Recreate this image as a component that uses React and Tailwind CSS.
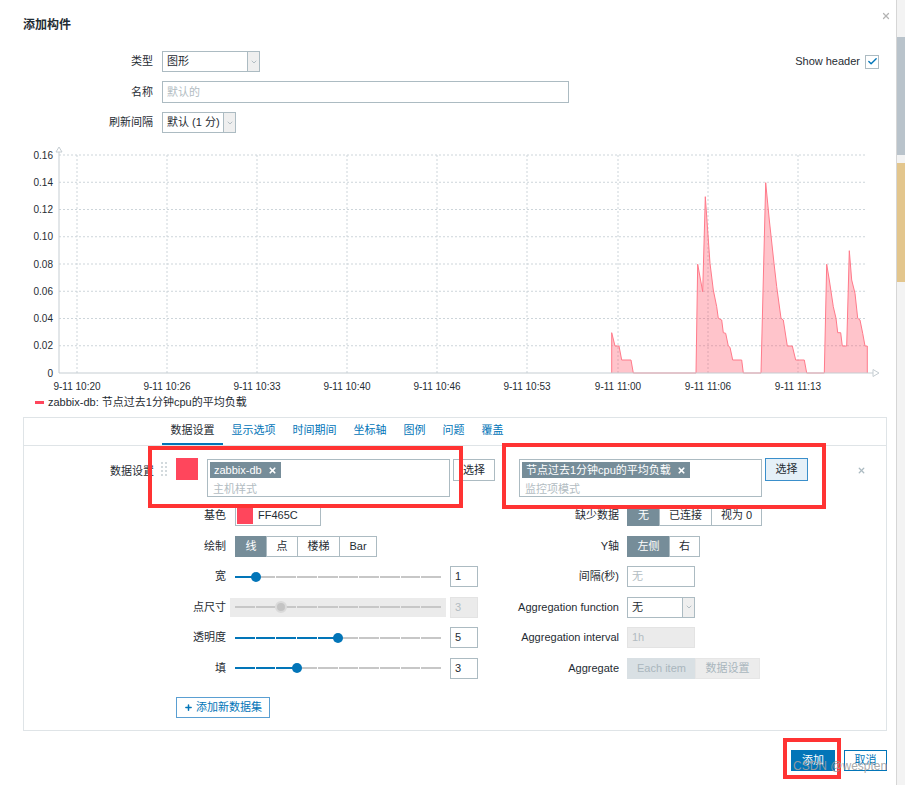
import React from 'react';
import { X, Check, ChevronDown, Plus } from 'lucide-react';

// chart geometry, page coordinates
const yOf = (v) => 373 - v * 1362.5;
const yTicks = [0.16, 0.14, 0.12, 0.1, 0.08, 0.06, 0.04, 0.02, 0];
const xTicks = [
    [77, '9-11 10:20'],
    [167, '9-11 10:26'],
    [257, '9-11 10:33'],
    [347, '9-11 10:40'],
    [437, '9-11 10:46'],
    [527, '9-11 10:53'],
    [618, '9-11 11:00'],
    [708, '9-11 11:06'],
    [798, '9-11 11:13'],
];
const data = [
    [611.7, 373], [611.7, 332.7], [615, 346], [619, 346], [621.7, 360], [631, 360], [633.3, 373],
    [696, 373], [697.7, 264.3], [702.7, 291.7], [705.3, 196.7], [710, 263.3], [713.3, 290], [716.7, 306.7],
    [718.3, 318.3], [721.7, 320], [723.3, 332.7], [725.7, 333.3], [728.3, 346], [730, 347.3], [732.7, 360],
    [741.7, 360], [743.3, 373],
    [761, 373], [765.7, 182.7], [769.3, 220], [774, 263.3], [776.7, 286.7], [781, 318.3], [783.3, 320],
    [787.3, 346], [792.3, 346], [795.7, 360], [804.3, 360], [806.7, 373],
    [824.3, 373], [826.7, 264.3], [829.3, 280], [833.3, 306.7], [836, 318.3], [837.7, 332.7], [840.7, 332.7],
    [842.3, 346], [846.7, 346], [849.3, 250.7], [851.7, 280], [855, 293.3], [857.7, 318.3], [860, 320],
    [862.7, 333.3], [865, 346], [867.3, 346], [867.3, 373],
];

function Chart() {
    const pts = data.map((p) => p.join(',')).join(' ');
    return (
        <svg width="896" height="250" viewBox="0 145 896 250" className="block">
            {yTicks.map((v) => (
                <g key={v}>
                    {v > 0 && (
                        <line x1="59" x2="867" y1={yOf(v)} y2={yOf(v)} stroke="#cdd5da" strokeDasharray="2 2" />
                    )}
                    <text x="53" y={yOf(v) + 3.5} textAnchor="end" fontSize="10" fill="#1f2c33">
                        {v === 0 ? '0' : v.toFixed(2)}
                    </text>
                </g>
            ))}
            {xTicks.map(([x, label]) => (
                <g key={label}>
                    <line x1={x} x2={x} y1="155" y2="373" stroke="#cdd5da" strokeDasharray="2 2" />
                    <text x={x} y="390" textAnchor="middle" fontSize="10" fill="#1f2c33">
                        {label}
                    </text>
                </g>
            ))}
            <polygon points={pts} fill="#ff465c" fillOpacity="0.32" />
            <polyline points={pts} fill="none" stroke="#ff7a8a" strokeWidth="1" />
            {/* axes */}
            <line x1="59" x2="59" y1="150" y2="373" stroke="#c5cdd2" />
            <line x1="59" x2="873" y1="373" y2="373" stroke="#c5cdd2" />
            <polygon points="56,152 62,152 59,147" fill="white" stroke="#c5cdd2" />
            <polygon points="873,369.5 873,376.5 879,373" fill="white" stroke="#c5cdd2" />
        </svg>
    );
}

function Select({ value, className }) {
    return (
        <div className={`flex h-full items-stretch border border-[#acbbc2] bg-white ${className}`}>
            <div className="flex flex-1 items-center pl-[4px]">{value}</div>
            <div className="flex w-[12px] items-center justify-center border-l border-[#acbbc2] bg-[#efefef]">
                <ChevronDown size={8} strokeWidth={1.5} className="text-[#768d99]" />
            </div>
        </div>
    );
}

function Seg({ items, disabled }) {
    return (
        <div className="flex h-[21px]">
            {items.map((it, i) => (
                <div
                    key={it.label}
                    className={`flex items-center justify-center border ${i > 0 ? '-ml-px' : ''} ${it.w} ${
                        disabled
                            ? i === 0
                                ? 'border-[#d9e0e4] bg-[#d9e0e4] text-[#a9b6bd]'
                                : 'border-[#e6e6e6] bg-[#ececec] text-[#a9b6bd]'
                            : it.on
                              ? 'border-[#768d99] bg-[#768d99] text-white'
                              : 'border-[#acbbc2] bg-white'
                    }`}
                >
                    {it.label}
                </div>
            ))}
        </div>
    );
}

function Slider({ pos, disabled }) {
    const filled = Math.round(pos * 10);
    return (
        <div
            className={`relative flex h-[19px] w-[206px] items-center ${
                disabled ? '-mx-[5px] box-content bg-[#ebebeb] px-[5px]' : ''
            }`}
        >
            <div className="flex w-full gap-px">
                {Array.from({ length: 10 }).map((_, i) => (
                    <div
                        key={i}
                        className={`h-[2px] flex-1 ${!disabled && i < filled ? 'bg-[#0275b8]' : 'bg-[#c7c7c7]'}`}
                    />
                ))}
            </div>
            <div
                className={`absolute top-1/2 -translate-x-1/2 -translate-y-1/2 rounded-full ${
                    disabled
                        ? 'h-[12px] w-[12px] border-2 border-[#dadada] bg-[#c4c4c4]'
                        : 'h-[10px] w-[10px] bg-[#0275b8]'
                }`}
                style={{ left: (disabled ? 5 : 0) + pos * 206 }}
            />
        </div>
    );
}

function Box({ children, className = '', muted, disabled }) {
    return (
        <div
            className={`flex h-[21px] items-center border px-[4px] ${
                disabled ? 'border-[#e3e3e3] bg-[#ebebeb] text-[#b2bcc2]' : 'border-[#acbbc2] bg-white'
            } ${muted ? 'text-[#b2bcc2]' : ''} ${className}`}
        >
            {children}
        </div>
    );
}

function Row({ left, lc, right, rc }) {
    return (
        <div className="flex h-[21px] items-center">
            <div className="w-[202px] text-right">{left}</div>
            <div className="ml-[9px] flex w-[243px] items-center">{lc}</div>
            <div className="w-[141px] text-right">{right}</div>
            <div className="ml-[8px] flex items-center">{rc}</div>
        </div>
    );
}

function Tag({ text }) {
    return (
        <div className="inline-flex h-[16px] items-center gap-[6px] bg-[#768d99] px-[4px] text-white">
            <span>{text}</span>
            <X size={9} strokeWidth={4.5} />
        </div>
    );
}

function Handle() {
    return (
        <div className="grid w-[6px] grid-cols-2 gap-[2px]">
            {Array.from({ length: 8 }).map((_, i) => (
                <div key={i} className="h-[2px] w-[2px] bg-[#d3dadd]" />
            ))}
        </div>
    );
}

export default function App() {
    return (
        <div className="flex h-[785px] w-[905px] overflow-hidden bg-white font-['Liberation_Sans','Noto_Sans_CJK_SC',sans-serif] text-[11px] leading-none text-[#1f2c33]">
            <div className="relative w-[896px] shrink-0">
                {/* 标题 */}
                <div className="pl-[23px] pt-[17px] text-[12px] font-bold leading-[16px]">添加构件</div>
                <X size={10} strokeWidth={3} className="absolute right-[5px] top-[11px] text-[#b4b4b4]" />

                {/* 基本字段 */}
                <div className="mt-[18px] flex h-[21px] items-center">
                    <div className="w-[153px] text-right">类型</div>
                    <Select value="图形" className="ml-[9px] w-[98px]" />
                    <div className="flex-1" />
                    <span>Show header</span>
                    <div className="ml-[5px] mr-[17px] flex h-[14px] w-[14px] items-center justify-center border border-[#acbbc2]">
                        <Check size={11} strokeWidth={3} className="text-[#0275b8]" />
                    </div>
                </div>
                <div className="mt-[9px] flex h-[22px] items-center">
                    <div className="w-[153px] text-right">名称</div>
                    <div className="ml-[9px] flex h-full w-[407px] items-center border border-[#acbbc2] pl-[4px] text-[#b2bcc2]">
                        默认的
                    </div>
                </div>
                <div className="mt-[9px] flex h-[21px] items-center">
                    <div className="w-[153px] text-right">刷新间隔</div>
                    <Select value="默认 (1 分)" className="ml-[9px] w-[74px]" />
                </div>

                {/* 图形预览 */}
                <div className="mt-[12px]">
                    <Chart />
                </div>
                <div className="flex h-[14px] items-center pl-[35px]">
                    <div className="h-[3px] w-[9px] bg-[#ff465c]" />
                    <span className="ml-[4px]">zabbix-db: 节点过去1分钟cpu的平均负载</span>
                </div>

                {/* 选项卡面板 */}
                <div className="ml-[23px] mt-[8px] w-[864px] border border-[#dfe4e7] pb-[12px]">
                    <div className="flex h-[28px] border-b border-[#dfe4e7] pl-[138px]">
                        {['数据设置', '显示选项', '时间期间', '坐标轴', '图例', '问题', '覆盖'].map((t, i) => (
                            <div
                                key={t}
                                className={`flex items-center border-b-2 px-[8.5px] ${
                                    i === 0 ? 'border-[#0275b8] text-[#1f2c33]' : 'border-transparent text-[#0275b8]'
                                }`}
                            >
                                {t}
                            </div>
                        ))}
                    </div>

                    {/* 数据集 */}
                    <div className="mt-[13px] flex items-start">
                        <div className="w-[130px] pt-[6px] text-right leading-[12px]">数据设置</div>
                        <div className="ml-[7px] mt-[3px]">
                            <Handle />
                        </div>
                        <div className="-mt-px ml-[9px] h-[22px] w-[22px] bg-[#ff465c]" />
                        <div className="ml-[9px] h-[38px] w-[243px] border border-[#acbbc2] p-[2px]">
                            <Tag text="zabbix-db" />
                            <div className="mt-[6px] pl-[3px] text-[#b2bcc2]">主机样式</div>
                        </div>
                        <div className="ml-[3px] flex h-[22px] w-[42px] items-center justify-center border border-[#acbbc2] bg-white">
                            选择
                        </div>
                        <div className="ml-[24px] h-[38px] w-[243px] border border-[#acbbc2] p-[2px]">
                            <Tag text="节点过去1分钟cpu的平均负载" />
                            <div className="mt-[6px] pl-[3px] text-[#b2bcc2]">监控项模式</div>
                        </div>
                        <div className="-mt-px ml-[3px] flex h-[23px] w-[43px] items-center justify-center border border-[#3a8fcb] bg-[#e5f0f8]">
                            选择
                        </div>
                        <X size={9} strokeWidth={3.5} className="ml-[49px] mt-[7px] text-[#acbbc2]" />
                    </div>

                    <div className="mt-[8px] flex flex-col gap-[9.5px]">
                        <Row
                            left="基色"
                            lc={
                                <div className="flex h-[21px] w-[86px] items-center border border-[#acbbc2]">
                                    <div className="ml-[1px] h-[17px] w-[16px] bg-[#ff465c]" />
                                    <span className="ml-[5px]">FF465C</span>
                                </div>
                            }
                            right="缺少数据"
                            rc={
                                <Seg
                                    items={[
                                        { label: '无', w: 'w-[33px]', on: true },
                                        { label: '已连接', w: 'w-[53px]' },
                                        { label: '视为 0', w: 'w-[51px]' },
                                    ]}
                                />
                            }
                        />
                        <Row
                            left="绘制"
                            lc={
                                <Seg
                                    items={[
                                        { label: '线', w: 'w-[32px]', on: true },
                                        { label: '点', w: 'w-[32px]' },
                                        { label: '楼梯', w: 'w-[43px]' },
                                        { label: 'Bar', w: 'w-[38px]' },
                                    ]}
                                />
                            }
                            right="Y轴"
                            rc={
                                <Seg
                                    items={[
                                        { label: '左侧', w: 'w-[43px]', on: true },
                                        { label: '右', w: 'w-[31px]' },
                                    ]}
                                />
                            }
                        />
                        <Row
                            left="宽"
                            lc={
                                <>
                                    <Slider pos={0.1} />
                                    <Box className="ml-[9px] w-[28px]">1</Box>
                                </>
                            }
                            right="间隔(秒)"
                            rc={
                                <Box className="w-[68px]" muted>
                                    无
                                </Box>
                            }
                        />
                        <Row
                            left="点尺寸"
                            lc={
                                <>
                                    <Slider pos={0.222} disabled />
                                    <Box className="ml-[9px] w-[28px]" disabled>
                                        3
                                    </Box>
                                </>
                            }
                            right="Aggregation function"
                            rc={
                                <div className="h-[21px]">
                                    <Select value="无" className="w-[68px]" />
                                </div>
                            }
                        />
                        <Row
                            left="透明度"
                            lc={
                                <>
                                    <Slider pos={0.5} />
                                    <Box className="ml-[9px] w-[28px]">5</Box>
                                </>
                            }
                            right="Aggregation interval"
                            rc={
                                <Box className="w-[68px]" disabled>
                                    1h
                                </Box>
                            }
                        />
                        <Row
                            left="填"
                            lc={
                                <>
                                    <Slider pos={0.3} />
                                    <Box className="ml-[9px] w-[28px]">3</Box>
                                </>
                            }
                            right="Aggregate"
                            rc={
                                <Seg
                                    disabled
                                    items={[
                                        { label: 'Each item', w: 'w-[69px]' },
                                        { label: '数据设置', w: 'w-[65px]' },
                                    ]}
                                />
                            }
                        />
                    </div>

                    <div className="ml-[152px] mt-[18px] flex h-[21px] w-[94px] items-center justify-center gap-[3px] border border-[#5a9fd2] text-[#0275b8]">
                        <Plus size={9} strokeWidth={4} />
                        <span>添加新数据集</span>
                    </div>
                </div>

                {/* 底部按钮 */}
                <div className="mt-[19px] flex justify-end gap-[9px] pr-[9px]">
                    <div className="flex h-[21px] w-[44px] items-center justify-center bg-[#0275b8] text-white">添加</div>
                    <div className="flex h-[21px] w-[43px] items-center justify-center border border-[#0275b8] text-[#0275b8]">
                        取消
                    </div>
                </div>

                {/* 标注框 */}
                <div className="absolute left-[148px] top-[446px] h-[62px] w-[315px] border-4 border-[#ff3333]" />
                <div className="absolute left-[502px] top-[443px] h-[66px] w-[324px] border-4 border-[#ff3333]" />
                <div className="absolute left-[783px] top-[738px] h-[41px] w-[58px] border-4 border-[#ff3333]" />
                <div className="absolute left-[793px] top-[760px] text-[12px] text-[#a0a0a0]/90">CSDN @wespten</div>
            </div>

            {/* 背景页滚动条 */}
            <div className="flex w-[9px] flex-col border-l border-[#d6d6d6] bg-[#f3f3f3]">
                <div className="h-[37px]" />
                <div className="h-[118px] bg-[#b9c3cb]" />
                <div className="h-[8px]" />
                <div className="h-[119px] bg-[#e3c68d]" />
            </div>
        </div>
    );
}
